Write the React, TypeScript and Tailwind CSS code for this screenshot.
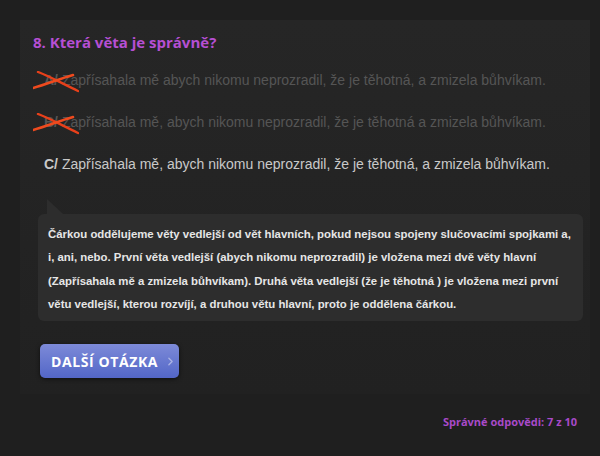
import { ChevronRight } from 'lucide-react'

const options = [
  { label: 'A/', text: 'Zapřísahala mě abych nikomu neprozradil, že je těhotná, a zmizela bůhvíkam.', wrong: true },
  { label: 'B/', text: 'Zapřísahala mě, abych nikomu neprozradil, že je těhotná a zmizela bůhvíkam.', wrong: true },
  { label: 'C/', text: 'Zapřísahala mě, abych nikomu neprozradil, že je těhotná, a zmizela bůhvíkam.', wrong: false },
]

function Cross() {
  return (
    <svg className="absolute -left-[11px] -top-[1px] w-[46px] h-[22px] pointer-events-none" viewBox="0 0 46 22">
      <path d="M5 1 C 18 6, 30 13, 45 20" stroke="#e8401a" strokeWidth="2.4" fill="none" strokeLinecap="round" />
      <path d="M0 17 C 14 13, 26 8, 40 4" stroke="#ef4a1e" strokeWidth="2.6" fill="none" strokeLinecap="round" />
    </svg>
  )
}

export default function App() {
  return (
    <div className="h-[456px] bg-[#1f1f1f] pt-5 px-5 font-['Liberation_Sans',Arial,sans-serif]">
      <div className="w-[570px] bg-gradient-to-b from-[#262626] to-[#212121] pt-3 pb-4 pl-[13px] pr-[7px]">
        <h2 className="font-['Open_Sans',sans-serif] font-bold text-[15px] leading-5 text-[#b64fd3]">
          8. Která věta je správně?
        </h2>

        <div className="mt-[18px] pl-[11px] space-y-[22px]">
          {options.map(o => (
            <div
              key={o.label}
              className={`relative text-[14px] leading-5 whitespace-nowrap ${o.wrong ? 'text-[#555555]' : 'text-[#c9c9c9]'}`}
            >
              <span className="relative font-bold">
                {o.label}
                {o.wrong && <Cross />}
              </span>{' '}
              {o.text}
            </div>
          ))}
        </div>

        {/* Explanation */}
        <div className="mt-[25px] pl-[5px]">
          <div className="ml-[9px] w-0 h-0 border-l-[16px] border-l-transparent border-b-[15px] border-b-[#2d2d2d] -scale-x-100" />
          <div className="rounded-md bg-[#2d2d2d] pl-[10px] pr-3 pt-[9px] pb-[5px] text-[11.4px] font-bold leading-[23.3px] text-[#e6e6e6]">
            Čárkou oddělujeme věty vedlejší od vět hlavních, pokud nejsou spojeny slučovacími spojkami a,
            i, ani, nebo. První věta vedlejší (abych nikomu neprozradil) je vložena mezi dvě věty hlavní
            (Zapřísahala mě a zmizela bůhvíkam). Druhá věta vedlejší (že je těhotná ) je vložena mezi první
            větu vedlejší, kterou rozvíjí, a druhou větu hlavní, proto je oddělena čárkou.
          </div>
        </div>

        <button className="mt-[23px] ml-[7px] h-[34px] w-[139px] flex items-center gap-[6px] pl-[11px] rounded-[5px] bg-gradient-to-b from-[#7d8ad8] to-[#5366c7] shadow-[0_1px_4px_rgba(0,0,0,0.6)] font-['Open_Sans',sans-serif] font-bold text-[14px] tracking-[0.6px] text-white">
          DALŠÍ OTÁZKA
          <ChevronRight size={13} strokeWidth={2.5} className="text-[#aab3e4]" />
        </button>
      </div>

      <div className="mt-5 pr-[3px] text-right font-['Open_Sans',sans-serif] font-bold text-[11px] leading-4 text-[#a94ac9]">
        Správné odpovědi: 7 z 10
      </div>
    </div>
  )
}
